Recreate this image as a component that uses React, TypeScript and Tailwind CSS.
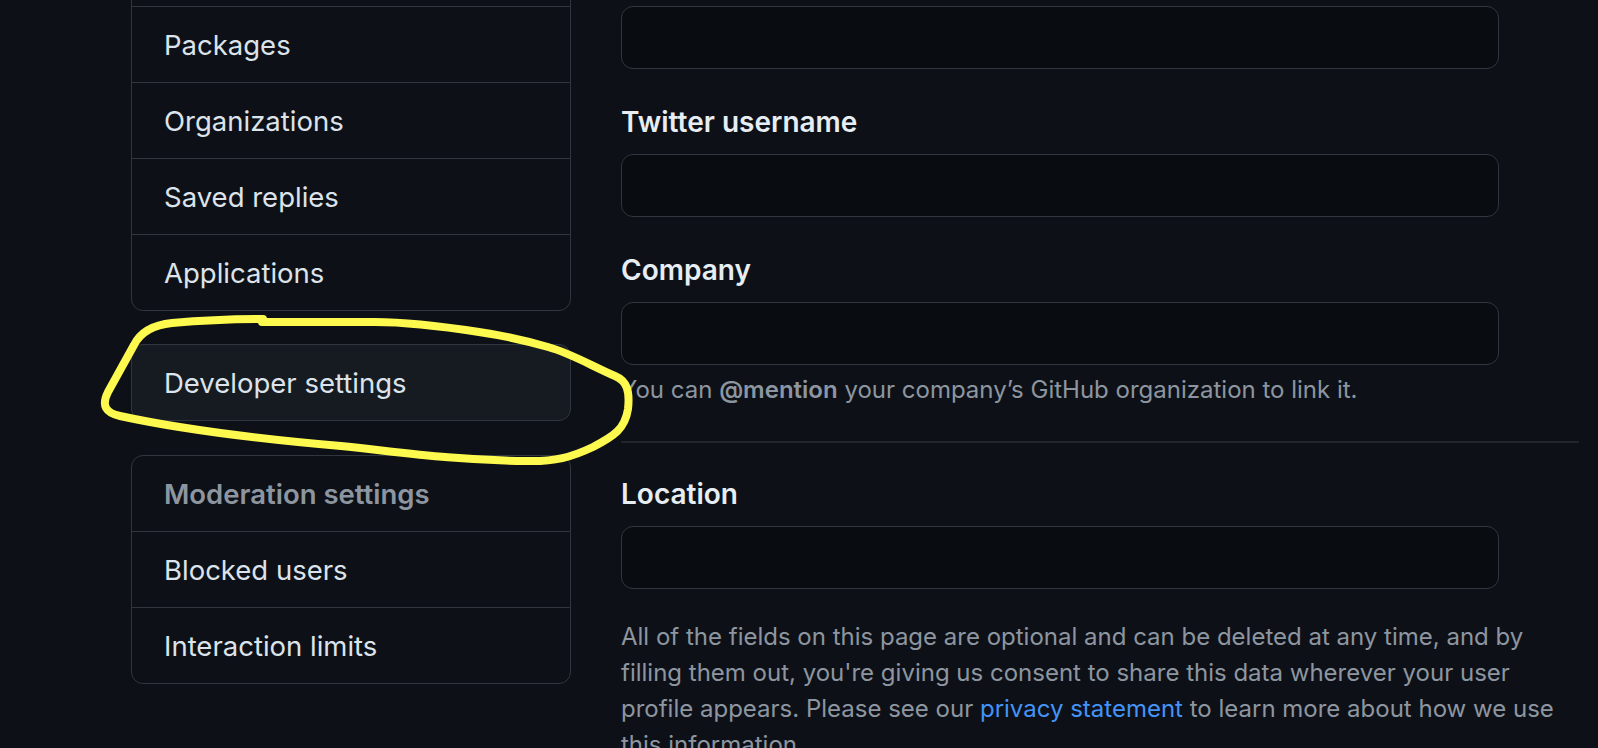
import React from 'react';

const topItems = ['Security log', 'Packages', 'Organizations', 'Saved replies', 'Applications'];
const moderationItems = ['Blocked users', 'Interaction limits'];

function NavRow({ label, first }: { label: string; first?: boolean }) {
  return (
    <div
      className={
        'flex items-center px-[32px] pt-[2px] text-[27.5px] text-[#dde3ea] ' +
        (first ? 'h-[75px]' : 'h-[76px] border-t border-[#30363d]')
      }
    >
      {label}
    </div>
  );
}

function Field({ label, className = '' }: { label: string; className?: string }) {
  return (
    <div className={className}>
      <div className="text-[28px] font-semibold leading-[42px] text-[#e6edf3]">{label}</div>
      <div className="mt-[11px] h-[63px] w-[878px] rounded-[12px] border border-[#30363d] bg-[#090c10]" />
    </div>
  );
}

export default function App() {
  return (
    <div className="relative h-[748px] overflow-hidden bg-[#0d1117] font-['Inter','Noto_Sans',sans-serif]">
      <div className="flex gap-[50px] pl-[131px]">
        <aside className="-mt-[70px] w-[440px] shrink-0">
          <nav className="rounded-[12px] border border-[#30363d]">
            {topItems.map((item, i) => (
              <NavRow key={item} label={item} first={i === 0} />
            ))}
          </nav>

          <div className="mt-[33px] rounded-[12px] border border-[#30363d] bg-[#161b22]">
            <NavRow label="Developer settings" first />
          </div>

          <div className="mt-[34px] rounded-[12px] border border-[#30363d]">
            <div className="flex h-[75px] items-center px-[32px] pt-[2px] text-[27.5px] font-semibold text-[#8d96a0]">
              Moderation settings
            </div>
            {moderationItems.map((item) => (
              <NavRow key={item} label={item} />
            ))}
          </div>
        </aside>

        <main className="w-[958px] shrink-0 pt-[6px]">
          <div className="h-[63px] w-[878px] rounded-[12px] border border-[#30363d] bg-[#090c10]" />

          <Field label="Twitter username" className="mt-[32px]" />
          <Field label="Company" className="mt-[32px]" />

          <p className="mt-[7px] text-[24px] leading-[36px] text-[#8d96a0]">
            You can <span className="font-semibold">@mention</span> your company’s GitHub organization to link it.
          </p>

          <div className="mt-[33px] h-[2px] bg-[#21262d]" />

          <Field label="Location" className="mt-[30px]" />

          <p className="mt-[30px] text-[24px] leading-[36px] text-[#8d96a0]">
            All of the fields on this page are optional and can be deleted at any time, and by filling them out,
            you're giving us consent to share this data wherever your user profile appears. Please see our{' '}
            <a className="text-[#4493f8]">privacy statement</a> to learn more about how we use this information.
          </p>
        </main>
      </div>

      {/* hand-drawn highlight */}
      <svg className="pointer-events-none absolute inset-0" width="1598" height="748" viewBox="0 0 1598 748">
        <path
          d="M 263 319 C 230 319 195 321 172 323 C 152 325 140 333 134 345 L 108 392 C 101 406 106 413 120 416 C 180 429 260 439 341 446 C 400 452 450 460 525 461 C 555 462 572 457 593 447 C 614 436 625 429 628 409 C 630 391 627 381 615 376 C 590 365 570 353 548 347 C 520 339 500 335 479 332 C 440 326 400 322 375 322 L 262 322"
          fill="none"
          stroke="#fdf94f"
          strokeWidth="8"
          strokeLinecap="round"
          strokeLinejoin="round"
        />
      </svg>
    </div>
  );
}
